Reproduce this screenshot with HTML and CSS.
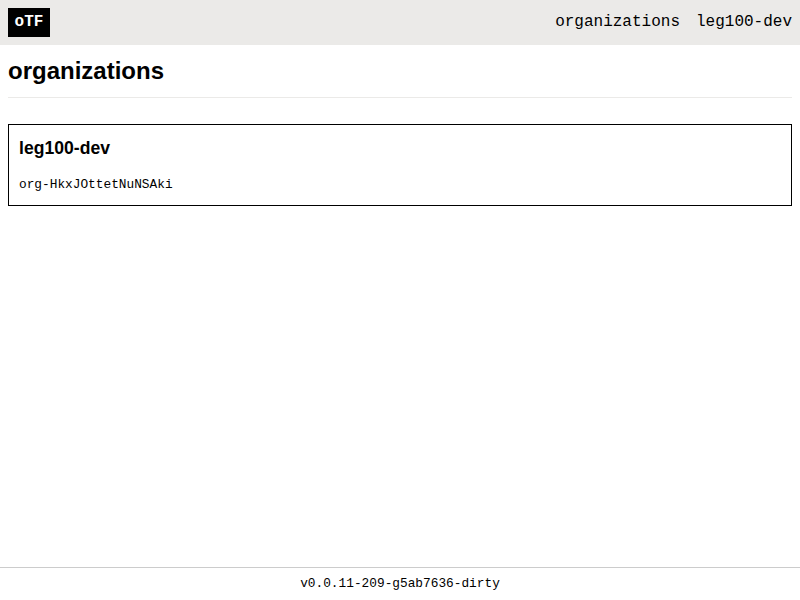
FILE: index.html
```html
<!DOCTYPE html>
<html lang="en">
<head>
<meta charset="utf-8">
<title>organizations</title>
<link rel="stylesheet" href="styles.css">
</head>
<body>
<header class="header">
  <a class="logo">oTF</a>
  <nav class="nav"><a>organizations</a><a>leg100-dev</a></nav>
</header>
<main class="content">
  <h1 class="title">organizations</h1>
  <div class="item">
    <h2 class="item-name">leg100-dev</h2>
    <div class="item-id">org-HkxJOttetNuNSAki</div>
  </div>
</main>
<footer class="footer">v0.0.11-209-g5ab7636-dirty</footer>
</body>
</html>
```
FILE: styles.css
```css
* { box-sizing: border-box; }
body {
  margin: 0;
  height: 100vh;
  display: flex;
  flex-direction: column;
  font-family: "Liberation Sans", Arial, sans-serif;
  color: #000;
  background: #fff;
}
.header {
  display: flex;
  justify-content: space-between;
  align-items: center;
  height: 45px;
  padding: 0 8px;
  background: #ebeae8;
  font: 16px/18px "Liberation Mono", monospace;
}
.logo {
  height: 29px;
  width: 42px;
  padding-top: 5px;
  text-align: center;
  background: #000;
  color: #fff;
  font-weight: bold;
}
.nav { display: flex; gap: 16px; padding-bottom: 2px; }
.content { flex: 1; padding: 0 8px; }
.title {
  margin: 0 0 26px;
  height: 53px;
  padding-top: 12px;
  border-bottom: 1px solid #ebeae8;
  font-size: 24px;
  line-height: 28px;
}
.item {
  height: 82px;
  padding: 13px 10px;
  border: 1px solid #000;
}
.item-name { margin: 0; font-size: 17.6px; line-height: 21px; }
.item-id {
  margin-top: 18px;
  font: 12.8px/15px "Liberation Mono", monospace;
}
.footer {
  height: 33px;
  padding-top: 8px;
  border-top: 1px solid #ccc;
  text-align: center;
  font: 12.8px/15px "Liberation Mono", monospace;
}
```
